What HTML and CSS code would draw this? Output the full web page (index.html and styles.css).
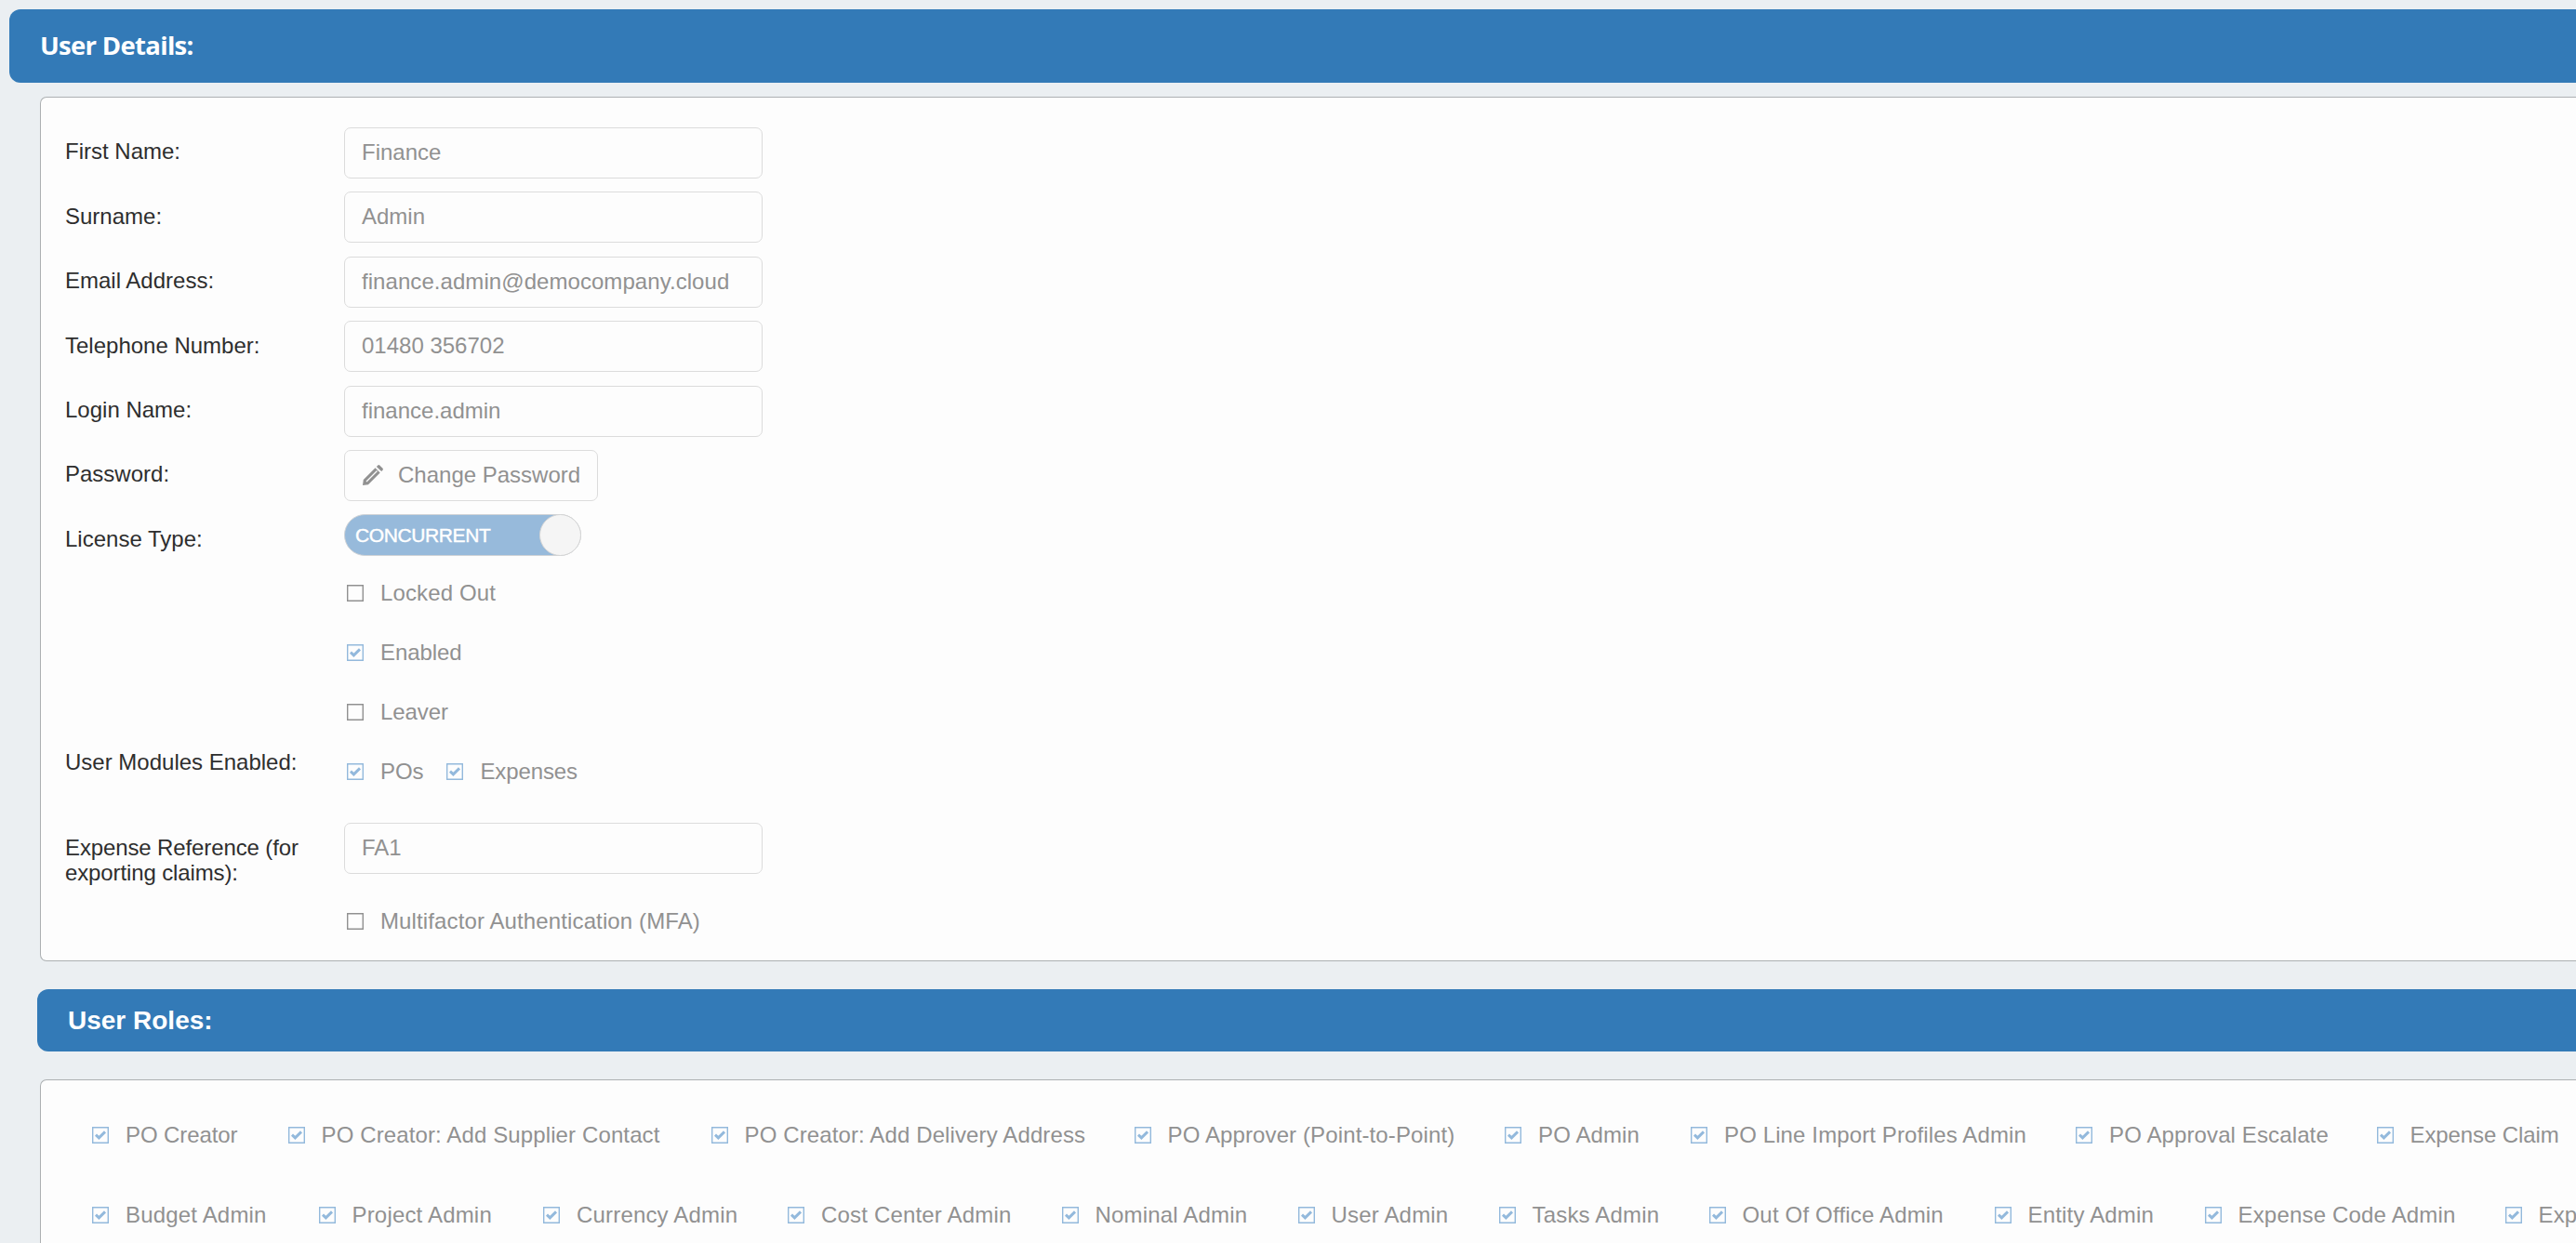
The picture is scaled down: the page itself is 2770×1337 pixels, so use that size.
FILE: index.html
```html
<!DOCTYPE html>
<html lang="en">
<head>
<meta charset="utf-8">
<title>User Details</title>
<link rel="stylesheet" href="styles.css">
</head>
<body>
<svg class="symbols" aria-hidden="true">
  <symbol id="box" viewBox="0 0 18 18"><path d="M.7.7h16.600v16.600H.7z" fill="none" stroke="currentColor" stroke-width="1.400"/></symbol>
  <symbol id="checked" viewBox="0 0 18 18"><path d="M.7.7h16.600v16.600H.7z" fill="none" stroke="currentColor" stroke-width="1.400"/><path d="M4 8.600l3.400 3.300 6.600-6.500" fill="none" stroke="currentColor" stroke-width="2.900"/></symbol>
  <symbol id="pencil" viewBox="0 0 22 22"><path d="M0 22l.8-6L13.500 3.300l5.200 5.200L6 21.200zM14.900 1.900l1.200-1.200q1.200-1.200 2.400 0l2.800 2.800q1.200 1.200 0 2.400l-1.200 1.200z" fill="currentColor"/><path d="M4 18L15.500 6.500" stroke="#fdfdfd" stroke-width="1.300"/></symbol>
</svg>

<header class="bar bar-details">User Details:</header>
<section class="panel panel-details">
  <div class="row"><label>First Name:</label><div class="field">Finance</div></div>
  <div class="row"><label>Surname:</label><div class="field">Admin</div></div>
  <div class="row"><label>Email Address:</label><div class="field email">finance.admin@democompany.cloud</div></div>
  <div class="row"><label>Telephone Number:</label><div class="field">01480 356702</div></div>
  <div class="row"><label>Login Name:</label><div class="field">finance.admin</div></div>
  <div class="row"><label>Password:</label><div class="field button"><svg class="pencil"><use href="#pencil"/></svg><span>Change Password</span></div></div>
  <div class="row row-license"><label>License Type:</label><div class="toggle"><span>CONCURRENT</span><i class="knob"></i></div></div>
  <div class="row row-check"><label></label><div class="check"><svg><use href="#box"/></svg><span>Locked Out</span></div></div>
  <div class="row row-check"><label></label><div class="check on tight"><svg><use href="#checked"/></svg><span>Enabled</span></div></div>
  <div class="row row-check"><label></label><div class="check tight"><svg><use href="#box"/></svg><span>Leaver</span></div></div>
  <div class="row row-check row-modules"><label>User Modules Enabled:</label><div class="check on tight"><svg><use href="#checked"/></svg><span>POs</span></div><div class="check on tight"><svg><use href="#checked"/></svg><span>Expenses</span></div></div>
  <div class="row row-reference"><label>Expense Reference (for exporting claims):</label><div class="field">FA1</div></div>
  <div class="row row-check"><label></label><div class="check"><svg><use href="#box"/></svg><span>Multifactor Authentication (MFA)</span></div></div>
</section>

<header class="bar bar-roles">User Roles:</header>
<section class="panel panel-roles">
  <div class="roles roles-a">
    <div class="check on tight"><svg><use href="#checked"/></svg><span>PO Creator</span></div>
    <div class="check on"><svg><use href="#checked"/></svg><span>PO Creator: Add Supplier Contact</span></div>
    <div class="check on"><svg><use href="#checked"/></svg><span>PO Creator: Add Delivery Address</span></div>
    <div class="check on"><svg><use href="#checked"/></svg><span>PO Approver (Point-to-Point)</span></div>
    <div class="check on"><svg><use href="#checked"/></svg><span>PO Admin</span></div>
    <div class="check on"><svg><use href="#checked"/></svg><span>PO Line Import Profiles Admin</span></div>
    <div class="check on"><svg><use href="#checked"/></svg><span>PO Approval Escalate</span></div>
    <div class="check on tight"><svg><use href="#checked"/></svg><span>Expense Claim</span></div>
  </div>
  <div class="roles roles-b">
    <div class="check on"><svg><use href="#checked"/></svg><span>Budget Admin</span></div>
    <div class="check on"><svg><use href="#checked"/></svg><span>Project Admin</span></div>
    <div class="check on"><svg><use href="#checked"/></svg><span>Currency Admin</span></div>
    <div class="check on"><svg><use href="#checked"/></svg><span>Cost Center Admin</span></div>
    <div class="check on"><svg><use href="#checked"/></svg><span>Nominal Admin</span></div>
    <div class="check on"><svg><use href="#checked"/></svg><span>User Admin</span></div>
    <div class="check on"><svg><use href="#checked"/></svg><span>Tasks Admin</span></div>
    <div class="check on"><svg><use href="#checked"/></svg><span>Out Of Office Admin</span></div>
    <div class="check on"><svg><use href="#checked"/></svg><span>Entity Admin</span></div>
    <div class="check on"><svg><use href="#checked"/></svg><span>Expense Code Admin</span></div>
    <div class="check on"><svg><use href="#checked"/></svg><span>Exp</span></div>
  </div>
</section>
</body>
</html>
```
FILE: styles.css
```css
* { box-sizing: border-box; }
html, body { height: 1337px; overflow: hidden; }
body {
  margin: 0;
  padding-top: 10px;
  background: #ebeff2;
  color: #2e2e2e;
  font: 24px/27px "Liberation Sans", Arial, sans-serif;
}
.symbols { display: none; }

.bar {
  display: flex;
  align-items: center;
  background: #337ab7;
  color: #fff;
  font-weight: 700;
  font-size: 28px;
  border-radius: 12px 0 0 12px;
}
.bar-details {
  height: 79px;
  margin-left: 10px;
  padding: 0 0 2px 33px;
  font-family: "Open Sans", "Noto Sans", sans-serif;
  font-size: 27.5px;
  letter-spacing: -0.7px;
}
.bar-roles {
  height: 67px;
  margin: 30px 0 0 40px;
  padding-left: 33px;
}

.panel {
  margin-left: 43px;
  background: #fdfdfd;
  border: 1px solid #acb0b2;
  border-right: 0;
  border-radius: 7px 0 0 7px;
}
.panel-details { height: 930px; margin-top: 15px; padding: 32px 0 0 26px; }
.panel-roles { height: 220px; margin-top: 30px; padding: 46px 0 0 55px; }

.row { display: flex; height: 69.4px; }
.row label { width: 300px; padding: 12.4px 40px 0 0; flex: none; }
.field {
  display: flex;
  align-items: center;
  width: 450px;
  height: 55px;
  padding: 0 18px 2px;
  border: 1px solid #dcdcdc;
  border-radius: 7px;
  color: #919191;
}
.email { letter-spacing: 0.06px; }
.button { width: 273px; padding-left: 19px; white-space: nowrap; }
.pencil { width: 22px; height: 22px; margin: 2px 16px 0 0; flex: none; }

.row-license { height: 53px; }
.toggle {
  position: relative;
  display: flex;
  align-items: center;
  width: 255px;
  height: 45px;
  padding: 0 0 0 11px;
  border: 1px solid #d0d3d6;
  border-radius: 23px;
  background: #97badb;
  color: #fff;
  font-size: 21px;
  letter-spacing: -0.4px;
  -webkit-text-stroke: 0.4px #fff;
}
.knob {
  position: absolute;
  top: -1px;
  right: -1px;
  width: 45px;
  height: 45px;
  border: 1px solid #d5d5d5;
  border-radius: 50%;
  background: #f5f5f5;
}

.check {
  display: flex;
  align-items: center;
  color: #919191;
  letter-spacing: 0.12px;
  white-space: nowrap;
}
.check svg { width: 18px; height: 18px; margin-right: 18px; flex: none; }
.check.on svg { color: #93b9dc; }
.check span { margin-top: -1px; }
.check.tight { letter-spacing: -0.1px; }
.row-check { height: 64px; }
.row-check .check { height: 64px; padding-left: 3px; }
.row-modules label { padding-top: 8px; }
.row-modules .check + .check { margin-left: 22px; }

.row-reference { height: 74px; margin-top: 23px; }
.row-reference label { padding-right: 35px; letter-spacing: -0.12px; }

.roles { display: grid; height: 86px; align-items: start; }
.roles-a { grid-template-columns: 210.500px 455px 455px 398.500px 200px 414px 323.500px 210px; }
.roles-b { grid-template-columns: 243.500px 241.500px 263px 294.500px 254px 216px 226px 307px 226px 323px 80px; }
.roles-b .check { letter-spacing: 0.18px; }
```
